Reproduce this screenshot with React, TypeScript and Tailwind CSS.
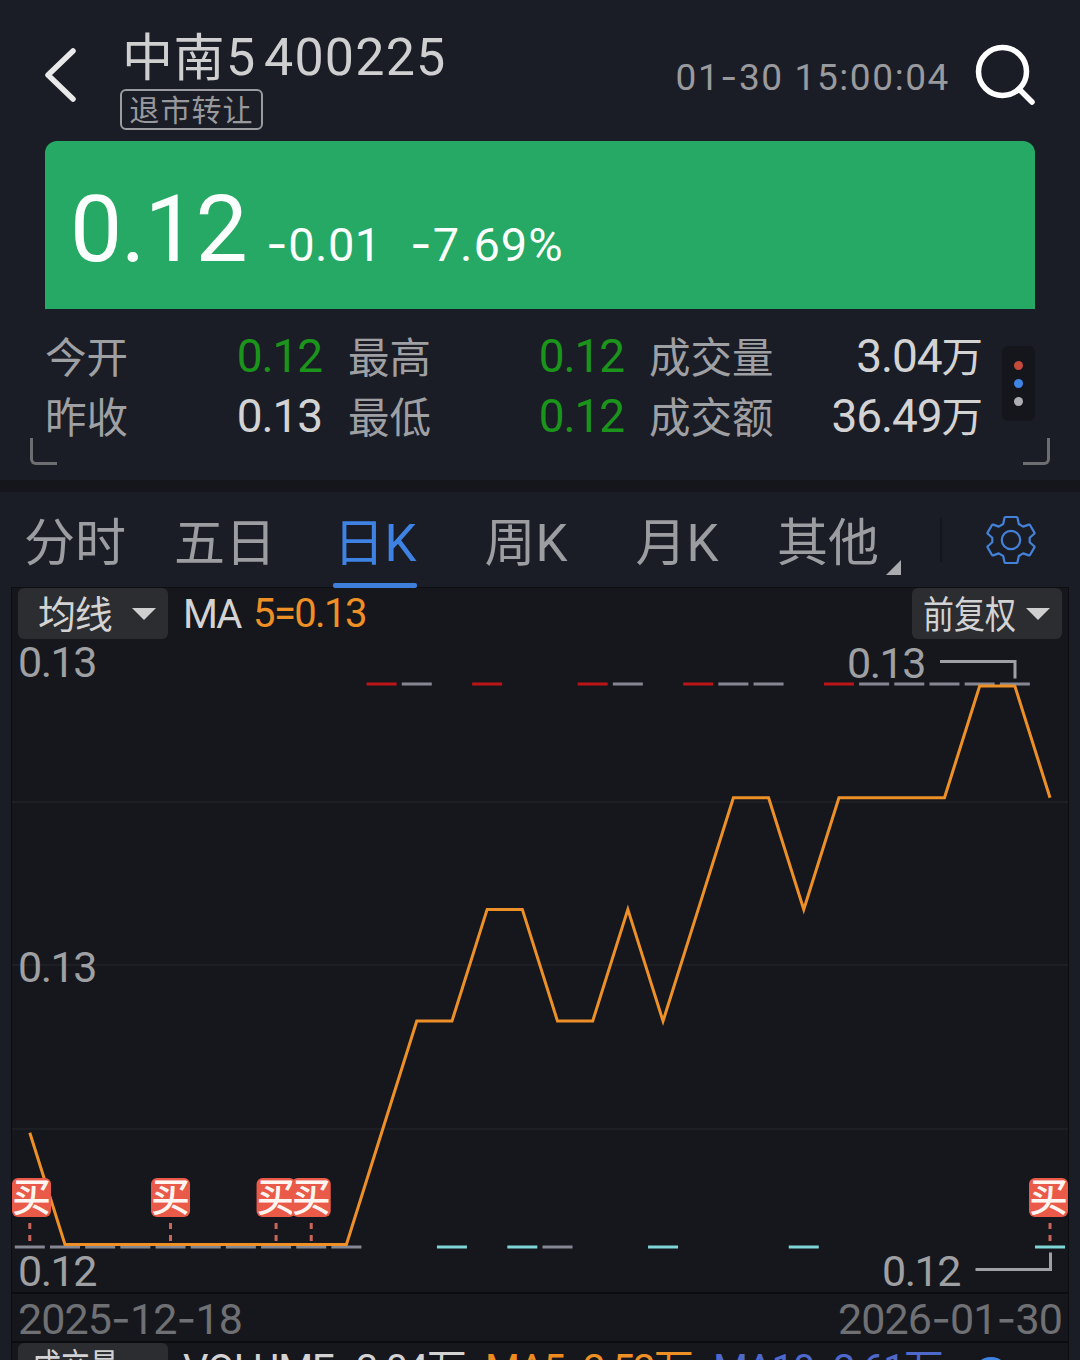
import { Fragment } from 'react';
import clsx from 'clsx';

/* ───────── Data ───────── */

const TABS = [
  { label: '分时', box: 'w-[100px] ml-[25px]' },
  { label: '五日', box: 'w-[100px] ml-[50px]' },
  { label: '日K', box: 'w-[84px] ml-[58px]', active: true },
  { label: '周K', box: 'w-[86px] ml-[66px]' },
  { label: '月K', box: 'w-[84px] ml-[66px]' },
  { label: '其他', box: 'w-[100px] ml-[59px]' },
];

// MA5 in steps of 0.002 above 0.12, one value per trading day
const MA5 = [
  1, 0, 0, 0, 0, 0, 0, 0, 0, 0, 1, 2, 2, 3, 3, 2, 2, 3, 2, 3, 4, 4, 3, 4, 4, 4, 4, 5, 5, 4,
];

// h = high (0.13), l = low (0.12); r = up, g = flat, c = down
const CANDLES = [
  'lg', 'lg', 'lg', 'lg', 'lg', 'lg', 'lg', 'lg', 'lg', 'lg',
  'hr', 'hg', 'lc', 'hr', 'lc', 'lg', 'hr', 'hg', 'lc', 'hr',
  'hg', 'hg', 'lc', 'hr', 'hg', 'hg', 'hg', 'hg', 'hg', 'lc',
];

const CANDLE_COLORS: Record<string, string> = {
  r: '#bb1517',
  g: '#858893',
  c: '#7fd6d8',
};

const BUYS = [0, 4, 7, 8, 29];

const CHART_W = 1056;
const CHART_H = 653;

const xOf = (i: number) => 17.8 + i * 35.18;
const yOf = (k: number) => 605.5 - k * 111.7;

/* ───────── Small parts ───────── */

// Roboto's hyphen is too short for figures, so it is set in Inter
function Num({ children }: { children: string }) {
  const parts = children.split('-');
  return (
    <>
      {parts.map((part, i) => (
        <Fragment key={i}>
          {i > 0 && <span className="font-['Inter']">-</span>}
          {part}
        </Fragment>
      ))}
    </>
  );
}

function Caret() {
  return (
    <svg width="24" height="12" viewBox="0 0 24 12" className="shrink-0">
      <path d="M0 0h24L12 12z" fill="#cfcfd0" />
    </svg>
  );
}

function Gear() {
  return (
    <svg width="50" height="50" viewBox="0 0 50 50" fill="none" stroke="#4482d8" strokeWidth="2.2" strokeLinejoin="round">
      <path d="M19.5 2h11q.8 0 1 .8l1.3 6.2 4.4 2.6 5.6-2q.8-.3 1.2.4l4.4 7.6q.4.7-.2 1.2l-4.5 4v4.4l4.5 4q.6.5.2 1.2l-4.4 7.6q-.4.7-1.2.4l-5.6-2-4.4 2.6-1.3 6.2q-.2.8-1 .8h-11q-.8 0-1-.8l-1.3-6.2-4.4-2.6-5.6 2q-.8.3-1.2-.4l-4.4-7.6q-.4-.7.2-1.2l4.5-4v-4.4l-4.5-4q-.6-.5-.2-1.2l4.4-7.6q.4-.7 1.2-.4l5.6 2 4.4-2.6 1.3-6.2q.2-.8 1-.8z" />
      <circle cx="25" cy="25" r="9.2" />
    </svg>
  );
}

/* ───────── Header ───────── */

function Header() {
  return (
    <header className="flex h-[141px] shrink-0">
      <svg width="36" height="60" viewBox="0 0 36 60" className="mt-[45px] ml-[42px]" fill="none">
        <path d="M31 6L6 30l25 24" stroke="#e9e9ea" strokeWidth="5.5" strokeLinecap="round" strokeLinejoin="round" />
      </svg>
      <div className="ml-[42px] flex flex-col items-start">
        <h1 className="mt-[27px] flex h-[60px] items-center whitespace-nowrap text-[#cfcfd0]">
          <span className="w-[106px] pt-[3px] pl-[2px] text-[51px] leading-[60px] tracking-[0.5px]">中南</span>
          <span className="w-[38px] pt-[2px] text-[52px] leading-[60px]">5</span>
          <span className="pt-[2px] text-[52px] leading-[60px] tracking-[1.2px]">400225</span>
        </h1>
        <div className="mt-[2px] flex h-[41px] w-[143px] items-center justify-center rounded-[6px] border-2 border-[#9b9ca0] pt-[2px] text-[30px] leading-[36px] tracking-[1.1px] whitespace-nowrap text-[#98999d]">
          退市转让
        </div>
      </div>
      <time className="mt-[55px] mr-[23px] ml-auto text-[37px] leading-[44px] tracking-[1.6px] whitespace-nowrap text-[#999a9e]">
        <Num>01-30 15:00:04</Num>
      </time>
      <svg width="64" height="64" viewBox="0 0 64 64" className="mt-[42px] mr-[43px]" fill="none" stroke="#fff" strokeLinecap="round">
        <circle cx="29.5" cy="29.5" r="24" strokeWidth="5.5" />
        <path d="M46 47l13 13" strokeWidth="5.5" />
      </svg>
    </header>
  );
}

function PriceCard() {
  return (
    <section className="mx-[45px] flex h-[168px] shrink-0 items-baseline rounded-t-[12px] bg-[#26a964] text-[#fbfffd]">
      <span className="ml-[25px] w-[196px] text-[93px] leading-[178px] tracking-[-1.2px]">0.12</span>
      <span className="w-[144px] text-[47px] tracking-[0.5px]">
        <Num>-0.01</Num>
      </span>
      <span className="text-[47px] tracking-[1px]">
        <Num>-7.69%</Num>
      </span>
    </section>
  );
}

type StatProps = { label: string; value: string; unit?: string; tone?: 'green'; box: string };

function Stat({ label, value, unit, tone, box }: StatProps) {
  return (
    <div className={clsx('flex h-[60px] items-center justify-between whitespace-nowrap', box)}>
      <span className="pt-[5px] text-[41.5px] leading-[60px] text-[#9fa0a4]">{label}</span>
      <span
        className={clsx(
          'flex items-center text-[46px] leading-[62px] tracking-[-1.1px]',
          tone === 'green' ? 'text-[#1a941a]' : 'text-[#d3d3d4]',
        )}
      >
        {value}
        {unit && <span className="pt-[3px] text-[41.5px] leading-[60px] tracking-normal">{unit}</span>}
      </span>
    </div>
  );
}

function Stats() {
  return (
    <section className="relative flex h-[171px] shrink-0 pt-[17px] pl-[45px]">
      <div>
        <div className="flex">
          <Stat label="今开" value="0.12" tone="green" box="w-[277px] mr-[26px]" />
          <Stat label="最高" value="0.12" tone="green" box="w-[276px] mr-[25px]" />
          <Stat label="成交量" value="3.04" unit="万" box="w-[334px]" />
        </div>
        <div className="flex">
          <Stat label="昨收" value="0.13" box="w-[277px] mr-[26px]" />
          <Stat label="最低" value="0.12" tone="green" box="w-[276px] mr-[25px]" />
          <Stat label="成交额" value="36.49" unit="万" box="w-[334px]" />
        </div>
      </div>
      <div className="mt-[20px] ml-[19px] flex h-[75px] w-[33px] flex-col items-center justify-center gap-[9px] rounded-[6px] bg-[#15161b]">
        <i className="size-[9px] rounded-full bg-[#c44a3a]" />
        <i className="size-[9px] rounded-full bg-[#3f85e6]" />
        <i className="size-[9px] rounded-full bg-[#aeaeb2]" />
      </div>
      {/* corner marks of the panel */}
      <i className="absolute bottom-[15px] left-[30px] size-[27px] rounded-bl-[6px] border-b-[3px] border-l-[3px] border-[#6d6e72]" />
      <i className="absolute right-[30px] bottom-[15px] size-[27px] rounded-br-[6px] border-r-[3px] border-b-[3px] border-[#6d6e72]" />
    </section>
  );
}

/* ───────── Chart ───────── */

function TabBar() {
  return (
    <nav className="flex h-[96px] shrink-0">
      {TABS.map((tab) => (
        <div
          key={tab.label}
          className={clsx(
            'relative flex h-full justify-center text-[51px] leading-[103px] whitespace-nowrap',
            tab.box,
            tab.active ? 'text-[#3e82e4]' : 'text-[#9c9da1]',
          )}
        >
          {tab.label}
          {tab.active && <i className="absolute bottom-0 left-0 h-[5px] w-[84px] rounded-[2px] bg-[#3e7fdc]" />}
        </div>
      ))}
      <svg width="15" height="15" viewBox="0 0 15 15" className="mt-[68px] ml-[8px]">
        <path d="M15 0v15H0z" fill="#aaabaf" />
      </svg>
      <i className="mt-[25px] ml-[39px] h-[45px] w-[2px] bg-[#15161b]" />
      <div className="mt-[23px] ml-[44px]">
        <Gear />
      </div>
    </nav>
  );
}

function Toolbar() {
  return (
    <div className="flex h-[51px] shrink-0 px-[6px] whitespace-nowrap">
      <button type="button" className="flex h-[51px] w-[150px] items-center justify-between rounded-[6px] bg-[#2c2d31] pr-[12px] pl-[20px] text-[38px] tracking-[-1.3px] text-[#d3d3d4]">
        <span className="pt-[3px] leading-[51px]">均线</span>
        <Caret />
      </button>
      <span className="ml-[15px] w-[70px] text-[40px] leading-[54px] tracking-[-2px] text-[#d3d3d4]">MA</span>
      <span className="text-[40px] leading-[51px] tracking-[-1.6px] text-[#ee9026]">5=0.13</span>
      <button type="button" className="ml-auto flex h-[51px] w-[150px] items-center rounded-[6px] bg-[#2c2d31] pl-[11px] text-[38px] text-[#d3d3d4]">
        <span className="w-[103px] origin-left scale-x-[0.815] pt-[3px] text-left leading-[51px]">前复权</span>
        <Caret />
      </button>
    </div>
  );
}

function KLineChart() {
  const points = MA5.map((k, i) => `${xOf(i)},${yOf(k)}`).join(' ');

  return (
    <svg width={CHART_W} height={CHART_H} viewBox={`0 0 ${CHART_W} ${CHART_H}`} className="block shrink-0 font-['Roboto','Noto_Sans_CJK_SC',sans-serif]">
      {[163, 326, 490].map((y) => (
        <line key={y} x1="0" x2={CHART_W} y1={y} y2={y} stroke="#222328" strokeWidth="1.5" />
      ))}

      {CANDLES.map((c, i) => (
        <rect key={i} x={xOf(i) - 15} y={c[0] === 'h' ? 43.5 : 606.5} width="30" height="3" fill={CANDLE_COLORS[c[1]]} />
      ))}

      <polyline points={points} fill="none" stroke="#ee9028" strokeWidth="3" />

      {/* axis labels */}
      <g fill="#9fa0a3" fontSize="43" letterSpacing="-1.5">
        <text x="6" y="38">0.13</text>
        <text x="6" y="343">0.13</text>
        <text x="6" y="646.5">0.12</text>
        <text x="835" y="39">0.13</text>
        <text x="870" y="646.5">0.12</text>
      </g>
      <path d="M928 22.5h75v17M963.5 630.5h75v-17" fill="none" stroke="#9fa0a3" strokeWidth="3" />

      {/* buy marks */}
      {BUYS.map((i) => {
        const left = Math.min(Math.max(xOf(i) - 19.5, 0), CHART_W - 39);
        return (
          <g key={i}>
            <rect x={left} y="539" width="39" height="39" rx="6" fill="#ea5a49" />
            <text x={left + 19.5} y="572" textAnchor="middle" fontSize="39" fontWeight="500" fill="#fff6f2">买</text>
            <path d={`M${xOf(i)} 584v19`} stroke="#c9655a" strokeWidth="3" strokeDasharray="6 6" />
          </g>
        );
      })}
    </svg>
  );
}

function VolumeBar() {
  return (
    <div className="flex h-[51px] shrink-0 px-[6px] text-[40px] leading-[53px] whitespace-nowrap">
      <div className="h-[51px] w-[150px] rounded-[6px] bg-[#2c2d31] pl-[14px] text-[#d3d3d4]">
        <span className="block origin-left scale-x-[0.76] text-[38px] leading-[50px]">成交量</span>
      </div>
      <span className="ml-[15px] w-[173px] tracking-[-1px] text-[#d3d3d4]">VOLUME:</span>
      <span className="w-[129px] tracking-[-1.8px] text-[#d3d3d4]">3.04万</span>
      <span className="w-[98px] tracking-[-1.6px] text-[#ee8a1f]">MA5:</span>
      <span className="w-[130px] tracking-[-1.8px] text-[#ee9026]">2.52万</span>
      <span className="w-[120px] tracking-[-1.4px] text-[#4f68cc]">MA10:</span>
      <span className="w-[134px] tracking-[-1.8px] text-[#4f68cc]">2.61万</span>
      <i className="mt-[14px] ml-[6px] size-[36px] rounded-full bg-[#3e82e4]" />
    </div>
  );
}

export default function App() {
  return (
    <main className="flex h-[1360px] w-[1080px] flex-col overflow-hidden bg-[#1b1d26] font-['Roboto','Noto_Sans_CJK_SC',sans-serif]">
      <Header />
      <PriceCard />
      <Stats />
      <div className="h-[12px] shrink-0 bg-[#15161b]" />
      <TabBar />
      <section className="mx-[12px] flex shrink-0 flex-col bg-[#16171c] shadow-[0_0_0_1px_#0d0e12]">
        <Toolbar />
        <KLineChart />
        <div className="flex h-[51px] shrink-0 justify-between border-y-2 border-[#0b0c10] px-[6px] text-[43px] leading-[49px] tracking-[-0.9px] whitespace-nowrap text-[#6f7074]">
          <span>
            <Num>2025-12-18</Num>
          </span>
          <span>
            <Num>2026-01-30</Num>
          </span>
        </div>
        <VolumeBar />
      </section>
    </main>
  );
}
